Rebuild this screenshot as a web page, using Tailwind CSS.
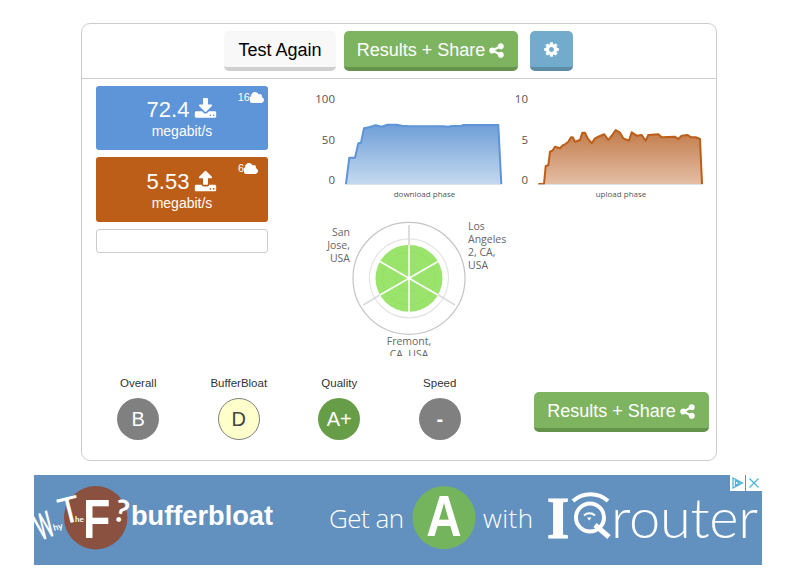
<!DOCTYPE html>
<html lang="en">
<head>
<meta charset="utf-8">
<title>Speed test results</title>
<script src="https://cdn.jsdelivr.net/npm/@tailwindcss/browser@4"></script>
</head>
<body class="bg-white font-['Liberation_Sans',Arial,sans-serif] overflow-hidden">
<div class="w-[789px] h-[585px] pt-[23px]">
  <section class="ml-[81px] w-[636px] h-[438px] border border-[#cccccc] rounded-[9px] bg-white">
    <header class="h-[55px] border-b border-[#cccccc] flex justify-center items-start pt-[7px] pr-[1px]">
      <button class="h-[40px] w-[112px] pt-[2px] rounded-[5px] bg-[#f8f8f8] border-b-4 border-[#cfcfcf] text-[18px] text-black">Test Again</button>
      <button class="ml-[8px] h-[40px] w-[174px] pt-[2px] rounded-[5px] bg-[#7eb460] border-b-4 border-[#65934b] text-[18px] text-white flex items-center justify-center gap-[3px]">Results + Share
        <svg class="w-[17px] h-[17px] fill-white" viewBox="0 0 1792 1792"><path d="M1344 1024q133 0 226.5 93.5t93.5 226.5-93.5 226.5-226.5 93.5-226.5-93.5-93.5-226.5q0-12 2-34l-360-180q-92 86-218 86-133 0-226.5-93.5t-93.5-226.5 93.5-226.5 226.5-93.5q126 0 218 86l360-180q-2-22-2-34 0-133 93.5-226.5t226.5-93.5 226.5 93.5 93.5 226.5-93.5 226.5-226.5 93.5q-126 0-218-86l-360 180q2 22 2 34t-2 34l360 180q92-86 218-86z"/></svg>
      </button>
      <button class="ml-[12px] h-[40px] w-[43px] rounded-[5px] bg-[#72abcb] border-b-4 border-[#5c8ba6] flex items-center justify-center">
        <svg class="w-[17px] h-[17px] fill-white" viewBox="0 0 1792 1792"><path d="M1152 896q0-106-75-181t-181-75-181 75-75 181 75 181 181 75 181-75 75-181zm512-109v222q0 12-8 23t-20 13l-185 28q-19 54-39 91 35 50 107 138 10 12 10 25t-9 23q-27 37-99 108t-94 71q-12 0-26-9l-138-108q-44 23-91 38-16 136-29 186-7 28-36 28h-222q-14 0-24.5-8.5t-11.5-21.5l-28-184q-49-16-90-37l-141 107q-10 9-25 9-14 0-25-11-126-114-165-168-7-10-7-23 0-12 8-23 15-21 51-66.5t54-70.5q-27-50-41-99l-183-27q-13-2-21-12.5t-8-23.5v-222q0-12 8-23t19-13l186-28q14-46 39-92-40-57-107-138-10-12-10-24 0-10 9-23 26-36 98.5-107.5t94.5-71.5q13 0 26 10l138 107q44-23 91-38 16-136 29-186 7-28 36-28h222q14 0 24.5 8.5t11.5 21.5l28 184q49 16 90 37l142-107q9-9 24-9 13 0 25 10 129 119 165 170 7 8 7 22 0 12-8 23-15 21-51 66.5t-54 70.5q26 50 41 98l183 28q13 2 21 12.5t8 23.5z"/></svg>
      </button>
    </header>

    <div class="h-[297px] flex">
      <div class="ml-[14px] w-[172px] pt-[7px] flex flex-col gap-[7px]">
        <div class="relative h-[64px] rounded-[3px] bg-[#5e94d8] text-white text-center pt-[9px]">
          <div class="flex justify-center items-center gap-[5px] h-[29px] text-[22px] leading-[29px]">72.4
            <svg class="w-[23px] h-[23px] fill-white" viewBox="0 0 1792 1792"><path d="M1344 1344q0-26-19-45t-45-19-45 19-19 45 19 45 45 19 45-19 19-45zm256 0q0-26-19-45t-45-19-45 19-19 45 19 45 45 19 45-19 19-45zm128-224v320q0 40-28 68t-68 28h-1472q-40 0-68-28t-28-68v-320q0-40 28-68t68-28h465l135 136q58 56 136 56t136-56l136-136h464q40 0 68 28t28 68zm-325-569q17 41-14 70l-448 448q-18 19-45 19t-45-19l-448-448q-31-29-14-70 17-39 59-39h256v-448q0-26 19-45t45-19h256q26 0 45 19t19 45v448h256q42 0 59 39z"/></svg>
          </div>
          <div class="text-[14px] leading-[16px] mt-[-1px]">megabit/s</div>
          <div class="absolute top-[4px] right-[3px] flex items-center text-[11px] leading-[15px]">16
            <svg class="w-[15px] h-[14px] fill-white" viewBox="0 0 1920 1792"><path d="M1792 1152q0 159-112.5 271.5t-271.5 112.5h-1088q-185 0-316.5-131.5t-131.5-316.5q0-132 71-241.5t187-163.5q-2-28-2-43 0-212 150-362t362-150q158 0 286.5 88t187.5 230q70-62 166-62 106 0 181 75t75 181q0 75-41 138 129 30 213 134.5t84 239.5z"/></svg>
          </div>
        </div>
        <div class="relative h-[65px] rounded-[3px] bg-[#bc5e17] text-white text-center pt-[10px]">
          <div class="flex justify-center items-center gap-[5px] h-[29px] text-[22px] leading-[29px]">5.53
            <svg class="w-[23px] h-[23px] fill-white" viewBox="0 0 1792 1792"><path d="M1344 1472q0-26-19-45t-45-19-45 19-19 45 19 45 45 19 45-19 19-45zm256 0q0-26-19-45t-45-19-45 19-19 45 19 45 45 19 45-19 19-45zm128-224v320q0 40-28 68t-68 28h-1472q-40 0-68-28t-28-68v-320q0-40 28-68t68-28h427q21 56 70.5 92t110.5 36h256q61 0 110.5-36t70.5-92h427q40 0 68 28t28 68zm-325-648q-17 40-59 40h-256v448q0 26-19 45t-45 19h-256q-26 0-45-19t-19-45v-448h-256q-42 0-59-40-17-39 14-69l448-448q18-19 45-19t45 19l448 448q31 30 14 69z"/></svg>
          </div>
          <div class="text-[14px] leading-[16px] mt-[-1px]">megabit/s</div>
          <div class="absolute top-[4px] right-[9px] flex items-center text-[11px] leading-[15px]">6
            <svg class="w-[15px] h-[14px] fill-white" viewBox="0 0 1920 1792"><path d="M1792 1152q0 159-112.5 271.5t-271.5 112.5h-1088q-185 0-316.5-131.5t-131.5-316.5q0-132 71-241.5t187-163.5q-2-28-2-43 0-212 150-362t362-150q158 0 286.5 88t187.5 230q70-62 166-62 106 0 181 75t75 181q0 75-41 138 129 30 213 134.5t84 239.5z"/></svg>
          </div>
        </div>
        <div class="h-[24px] rounded-[3px] border border-[#cccccc] bg-white"></div>
      </div>

      <svg class="ml-[32px] mt-[6px] w-[416px] h-[275px] font-['Open_Sans',sans-serif]" viewBox="300 85 416 275">
        <defs>
          <linearGradient id="dl" x1="0" y1="0" x2="0" y2="1"><stop offset="0" stop-color="#6f9fd8"/><stop offset="1" stop-color="#c4d9ef"/></linearGradient>
          <linearGradient id="ul" x1="0" y1="0" x2="0" y2="1"><stop offset="0" stop-color="#c27b49"/><stop offset="1" stop-color="#e4bea6"/></linearGradient>
          <clipPath id="radar"><rect x="300" y="85" width="416" height="271"/></clipPath>
        </defs>
        <g font-size="11.5" fill="#555555" text-anchor="end">
          <text x="335" y="103">100</text><text x="335" y="144">50</text><text x="335" y="184">0</text>
          <text x="528" y="103">10</text><text x="528" y="144">5</text><text x="528" y="184">0</text>
        </g>
        <g font-size="8" fill="#555555" text-anchor="middle">
          <text x="424.500" y="197">download phase</text><text x="621" y="197">upload phase</text>
        </g>
        <path fill="url(#dl)" stroke="#5e94d8" stroke-width="2" stroke-linejoin="round" d="M346 184L349.300 157.700L355 157.700L358.300 143.300L361 142.700L364 128.300L370 127L375.700 125.300L381.700 126.700L387.300 124.700L396.700 124.700L401.700 125.700L410 126.300L443.300 126.300L448.300 126.700L451.700 126L461.700 125.700L463.300 125L498.300 125L501.300 184"/>
        <path d="M345 184.500H502" stroke="#ccd6eb" stroke-width="1" opacity=".7"/>
        <path fill="url(#ul)" stroke="#bc5e17" stroke-width="2" stroke-linejoin="round" d="M538.300 184L544 184L545.700 166L548.300 165.300L550 151.700L552.300 150.700L555 146.700L560 148.300L562.300 145.700L565 144.300L568.300 141.700L571 137.300L572.700 137.300L575 141.700L580 140L582.300 132.700L585 132.700L587.700 138.300L591.700 143.300L595 138.300L598.300 136.700L604.300 134.300L608.300 140L611.700 135.700L615.700 130L620 132.700L623.300 138.300L629 140.700L631.700 132.300L636.700 135.700L641.700 135L645.700 140.700L648.300 135L658.300 134.300L661.700 137.300L675 136.700L678.300 139L681.700 135.700L687.700 135L691 137.300L695.700 137.300L700 139L702 184"/>
        <path d="M538 184.500H703" stroke="#ccd6eb" stroke-width="1" opacity=".7"/>

        <g clip-path="url(#radar)">
          <g fill="none">
            <circle cx="409" cy="278.300" r="56" stroke="#c4c4c4" stroke-width="1.200"/>
            <circle cx="409" cy="278.300" r="39.500" stroke="#e4e4e4" stroke-width="1.200"/>
            <path d="M409 225V245M438.300 295L455 305M379.700 295L363.300 305" stroke="#dddddd" stroke-width="2"/>
          </g>
          <circle cx="409" cy="278.300" r="33.500" fill="#9ae46c"/>
          <circle cx="409" cy="278.300" r="26.500" fill="none" stroke="#93dc67" stroke-width=".8"/>
          <circle cx="409" cy="278.300" r="13.500" fill="none" stroke="#93dc67" stroke-width=".8"/>
          <path d="M409 245V312.500M380 261.500L438 295M438 261.500L380 295" stroke="#ffffff" stroke-width="1.500"/>
          <g font-size="10.500" fill="#666666">
            <g text-anchor="end"><text x="350" y="236">San</text><text x="350" y="249">Jose,</text><text x="350" y="262">USA</text></g>
            <text x="468" y="230">Los</text><text x="468" y="243">Angeles</text><text x="468" y="256">2, CA,</text><text x="468" y="269">USA</text>
            <g text-anchor="middle"><text x="409" y="345">Fremont,</text><text x="409" y="358">CA, USA</text></g>
          </g>
        </g>
      </svg>
    </div>

    <div class="flex items-start pl-[6px] pr-[7px]">
      <div class="w-[100.500px] flex flex-col items-center text-[#333333]"><span class="text-[11.500px] leading-[14px]">Overall</span><span class="mt-[8px] w-[42px] h-[42px] rounded-full bg-[#808080] text-white text-[20px] flex items-center justify-center">B</span></div>
      <div class="w-[100.500px] flex flex-col items-center text-[#333333]"><span class="text-[11.500px] leading-[14px]">BufferBloat</span><span class="mt-[8px] w-[42px] h-[42px] rounded-full bg-[#ffffcc] border border-[#808080] text-[#444444] text-[20px] flex items-center justify-center">D</span></div>
      <div class="w-[100.500px] flex flex-col items-center text-[#333333]"><span class="text-[11.500px] leading-[14px]">Quality</span><span class="mt-[8px] w-[42px] h-[42px] rounded-full bg-[#689d47] text-white text-[20px] flex items-center justify-center">A+</span></div>
      <div class="w-[100.500px] flex flex-col items-center text-[#333333]"><span class="text-[11.500px] leading-[14px]">Speed</span><span class="mt-[8px] w-[42px] h-[42px] rounded-full bg-[#808080] text-white text-[20px] font-bold flex items-center justify-center">-</span></div>
      <button class="ml-auto mt-[16px] h-[40px] w-[175px] pt-[2px] rounded-[5px] bg-[#7eb460] border-b-4 border-[#65934b] text-[18px] text-white flex items-center justify-center gap-[3px]">Results + Share
        <svg class="w-[17px] h-[17px] fill-white" viewBox="0 0 1792 1792"><path d="M1344 1024q133 0 226.5 93.5t93.5 226.5-93.5 226.5-226.5 93.5-226.5-93.5-93.5-226.5q0-12 2-34l-360-180q-92 86-218 86-133 0-226.5-93.5t-93.5-226.5 93.5-226.5 226.5-93.5q126 0 218 86l360-180q-2-22-2-34 0-133 93.5-226.5t226.5-93.5 226.5 93.5 93.5 226.5-93.5 226.5-226.5 93.5q-126 0-218-86l-360 180q2 22 2 34t-2 34l360 180q92-86 218-86z"/></svg>
      </button>
    </div>
  </section>

  <svg class="block ml-[34px] mt-[14px] w-[728px] h-[90px]" viewBox="34 475 728 90">
    <rect x="34" y="475" width="728" height="90" fill="#6291bf"/>
    <circle cx="95.700" cy="517.700" r="31.700" fill="#8a5040"/>
    <g fill="#ffffff">
      <text transform="translate(41 541) rotate(-22) scale(.6 1.350)" font-family="Lato" font-weight="700" font-size="27">W</text>
      <text transform="translate(54 531) rotate(-15)" font-family="Lato" font-size="9" font-weight="700">hy</text>
      <text transform="translate(62 525) rotate(-14)" font-family="Lato" font-size="36">T</text>
      <text x="75" y="522" font-family="Lato" font-size="8" font-weight="700">he</text>
      <text transform="translate(83 538) scale(.8 1)" font-family="Liberation Sans" font-weight="700" font-size="56">F</text>
      <text transform="translate(112 520) rotate(14)" font-family="Lato" font-size="31" font-weight="700">?</text>
      <text x="131" y="525" font-family="Liberation Sans" font-weight="700" font-size="27.200">bufferbloat</text>
      <text x="329" y="528" font-family="Open Sans" font-weight="300" font-size="26" textLength="75">Get an</text>
      <text x="483" y="528" font-family="Open Sans" font-weight="300" font-size="26" textLength="50">with</text>
    </g>
    <circle cx="444" cy="517.700" r="31.500" fill="#74b45c"/>
    <text transform="translate(444 536) scale(.86 1)" text-anchor="middle" fill="#ffffff" font-family="Liberation Sans" font-weight="700" font-size="57">A</text>
    <text transform="translate(547 538) scale(.95 1)" fill="#ffffff" stroke="#ffffff" stroke-width="1.200" font-family="Liberation Serif" font-weight="700" font-size="60">I</text>
    <g fill="none" stroke="#ffffff">
      <circle cx="590" cy="517.500" r="14" stroke-width="4"/>
      <path d="M573 501A26 26 0 0 1 608 501" stroke-width="4"/>
      <path d="M584 515.500A8 8 0 0 1 595 515.500" stroke-width="2"/>
      <path d="M595 525L609 537" stroke-width="5"/>
    </g>
    <path d="M587 517.500h4.500L589.200 520.500z" fill="#ffffff"/>
    <text x="611" y="538" fill="#ffffff" font-family="Lato" font-weight="300" font-size="56" textLength="147">router</text>
    <rect x="730" y="475" width="15" height="16" fill="#ffffff"/>
    <rect x="746" y="475" width="16" height="16" fill="#ffffff"/>
    <path d="M733 478V488L742.500 483Z M735.500 480.500V485.500L739.500 483Z" fill="none" stroke="#4fb3d9" stroke-width="1.300"/>
    <path d="M749.500 478.500L758.500 487.500M758.500 478.500L749.500 487.500" stroke="#4fb3d9" stroke-width="1.300"/>
  </svg>
</div>
</body>
</html>
